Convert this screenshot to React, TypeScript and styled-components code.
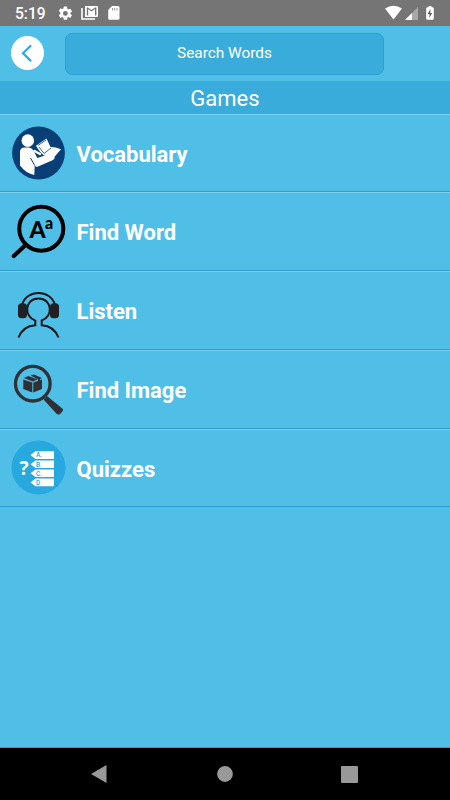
import React from "react";
import styled, { createGlobalStyle } from "styled-components";

const GlobalStyle = createGlobalStyle`
  * { box-sizing: border-box; }
  body { margin: 0; background: #4fbfe8; font-family: Roboto, sans-serif; }
  svg { display: block; }
`;

const Screen = styled.div`
  display: flex;
  flex-direction: column;
  width: 450px;
  height: 800px;
  overflow: hidden;
  background: #4fbfe8;
  color: #fff;
`;

const StatusBar = styled.header`
  display: flex;
  justify-content: space-between;
  height: 26px;
  flex: none;
  background: #757575;
`;

const StatusGroup = styled.div`
  display: flex;
  align-items: center;
`;

const Clock = styled.span`
  width: 42px;
  margin-left: 15px;
  padding-top: 2px;
  font-size: 15.6px;
  font-weight: 500;
  line-height: 26px;
`;

const SearchBar = styled.div`
  display: flex;
  height: 55px;
  flex: none;
  padding: 7px 0 0 11px;
`;

const BackButton = styled.button`
  display: flex;
  align-items: center;
  justify-content: center;
  width: 33px;
  height: 34px;
  margin: 3px 21px 0 0;
  padding: 0;
  border: 0;
  border-radius: 50%;
  background: #fff;
`;

const SearchField = styled.div`
  display: flex;
  align-items: center;
  justify-content: center;
  width: 319px;
  height: 42px;
  padding-bottom: 3px;
  border: 1px solid #309fd0;
  border-radius: 7px;
  background: #3aacdb;
  font-size: 15.4px;
`;

const Title = styled.h1`
  height: 32.6px;
  flex: none;
  margin: 0;
  padding-top: 1px;
  background: #3aacdb;
  font-size: 22px;
  font-weight: 400;
  line-height: 34px;
  text-align: center;
`;

const List = styled.main`
  flex: 1;
  border-bottom: 1px solid #3597bd;
`;

const Row = styled.div`
  display: flex;
  align-items: center;
  height: 78.75px;
  padding: 1px 0 0 11px;
  border-top: 1px solid #77d0f2;
  border-bottom: 1px solid #2b9dd3;
`;

const RowLabel = styled.span`
  margin-left: 10.5px;
  padding-top: 2.2px;
  font-size: 22px;
  font-weight: 700;
  line-height: 30px;
`;

const NavBar = styled.nav`
  display: flex;
  align-items: center;
  justify-content: space-between;
  height: 52px;
  flex: none;
  padding: 0 92px 0 91px;
  background: #000;
`;

const VocabularyIcon = () => (
  <svg width="55" height="56" viewBox="0 0 55 56">
    <circle cx="27.5" cy="28" r="26.4" fill="#073f76" />
    <circle cx="16.8" cy="15.6" r="6.3" fill="#fff" />
    <path d="M9 27q0-4.500 4.500-4.500h3.500q4 0 6 4l3.300 6.500 9.700-3.300q3.500-1 5 1 2-.5 2.500 1.500t-2.500 3.300L27 41.500q-2 .7-3.300-1L23.300 50Q15 48.500 9 40.500Z" fill="#fff" />
    <path d="m19.500 33 4.200 7.500" fill="none" stroke="#073f76" strokeWidth="1" />
    <path d="m25 20.800 10.500-7.300 4 8.500q5 0 10.500 2.300L42.500 33q-4.500-3-9.500-2.500-4-2.800-8-9.700Z" fill="#fff" />
    <path d="m27 20.500 8-5.500M28 22l5 6.500 7-5.500" fill="none" stroke="#073f76" strokeWidth=".8" />
    <path d="m23.500 26 5.500 3" stroke="#fff" strokeWidth="2.500" strokeLinecap="round" />
  </svg>
);

const FindWordIcon = () => (
  <svg width="55" height="56" viewBox="0 0 55 56">
    <circle cx="30.3" cy="24.7" r="22" fill="none" stroke="#000" strokeWidth="4" />
    <path d="M14.500 41 2.800 52" stroke="#000" strokeWidth="4.200" strokeLinecap="round" />
    <text x="18.500" y="34" fontFamily="Lato, sans-serif" fontWeight="900" fontSize="23">A</text>
    <text x="34" y="25" fontFamily="Lato, sans-serif" fontWeight="900" fontSize="16">a</text>
  </svg>
);

const ListenIcon = () => (
  <svg width="55" height="56" viewBox="0 0 55 56">
    <g fill="none" stroke="#171719" strokeWidth="2">
      <path d="M11 22C15 6 40 6 44 22" />
      <path d="M24.300 37.500C12.500 34 13.500 15.500 27.500 15.500S42.500 34 30.700 37.500V42.300Q43 43 47.500 54.500M24.300 37v5.300Q12 43 7.500 54.500" />
    </g>
    <rect x="7" y="20.300" width="9" height="15" rx="3.500" fill="#202024" />
    <rect x="39" y="20.300" width="9" height="15" rx="3.500" fill="#202024" />
  </svg>
);

const FindImageIcon = () => (
  <svg width="55" height="56" viewBox="0 0 55 56">
    <circle cx="21.800" cy="21.700" r="17.300" fill="none" stroke="#303035" strokeWidth="3.300" />
    <path d="m32.500 37.500 3.500-3.500 15 12.300q2 1.700 0 3.700L49 52q-2 1.500-3.700-.5Z" fill="#303035" />
    <path d="m12.300 17.500 9 3v10l-9-3.500Zm10 3 8.700-3V27l-8.700 3.500ZM12.800 16l4.700-2 9 3.500-4.700 2Zm6.700-2.500 3.500-1 8 3.500-2 1v3l-2 .700v-3.200Z" fill="#303035" />
  </svg>
);

const QuizIcon = () => (
  <svg width="55" height="56" viewBox="0 0 55 56">
    <circle cx="27.500" cy="27.500" r="27" fill="#27a8df" />
    <text x="8.500" y="35" fill="#fff" fontFamily="Noto Sans, sans-serif" fontSize="19" fontWeight="700">?</text>
    {["A.", "B.", "C.", "D"].map((letter, i) => (
      <g key={letter} transform={`translate(19 ${11.3 + i * 9.1})`}>
        <path d="M.5 3.800 5.500 0H24v7.600H5.500Z" fill="#fff" />
        <text x="6" y="6.200" fill="#27a8df" fontFamily="Roboto" fontSize="6.500" fontWeight="500">{letter}</text>
      </g>
    ))}
  </svg>
);

const games = [
  { name: "Vocabulary", Icon: VocabularyIcon },
  { name: "Find Word", Icon: FindWordIcon },
  { name: "Listen", Icon: ListenIcon },
  { name: "Find Image", Icon: FindImageIcon },
  { name: "Quizzes", Icon: QuizIcon },
];

export default function App() {
  return (
    <Screen>
      <GlobalStyle />
      <StatusBar>
        <StatusGroup>
          <Clock>5:19</Clock>
          <svg width="66" height="26" viewBox="57 0 66 26" fill="#fff">
            <g transform="translate(57 5) scale(.7)">
              <path d="M19.140 12.940a7 7 0 0 0 0-1.880l2.030-1.580a.5.5 0 0 0 .12-.61l-1.920-3.320a.5.5 0 0 0-.59-.22l-2.390.96a7 7 0 0 0-1.620-.94l-.36-2.540A.5.5 0 0 0 13.930 2h-3.840a.5.5 0 0 0-.47.410l-.36 2.540a7 7 0 0 0-1.620.94l-2.390-.96a.5.5 0 0 0-.59.220L2.740 8.470a.5.5 0 0 0 .12.610l2.030 1.580a7 7 0 0 0 0 1.880l-2.030 1.580a.5.5 0 0 0-.12.610l1.920 3.320c.12.220.37.290.59.220l2.390-.96q.75.600 1.620.94l.36 2.540c.05.240.24.410.47.410h3.840c.24 0 .44-.17.470-.41l.36-2.540q.87-.35 1.620-.94l2.390.96c.22.080.47 0 .59-.22l1.920-3.320a.5.5 0 0 0-.12-.61ZM12 15.500A3.500 3.500 0 1 1 12 8.500a3.500 3.500 0 0 1 0 7Z" fillRule="evenodd" />
            </g>
            <path d="M82 8v11h13" fill="none" stroke="#fff" strokeWidth="1.600" />
            <path d="M85 6h12q1 0 1 1v9q0 1-1 1H85Zm1.800 1.500v8h1.400V9l3.300 2.600L95 9v6.500h1.400v-8h-1.300L91.500 10l-3.600-2.500Z" fillRule="evenodd" />
            <path d="M112 6h6q1.500 0 1.500 1.500v11q0 1.300-1.300 1.300h-8.700q-1.300 0-1.300-1.300V10Z" />
            <path d="M112.500 8v2.500m2.200-2.500v2.500M117 8v2.500" stroke="#9a9a9a" />
          </svg>
        </StatusGroup>
        <StatusGroup>
          <svg width="65" height="26" viewBox="385 0 65 26" fill="#fff">
            <path d="M385 8.500Q393.500 3 402 8.500L393.500 19.500Z" />
            <path d="M418 7v13h-13Z" fill="#a8a8a8" />
            <path d="M412 13v7h-7Z" />
            <path d="M427.500 7.200h1V6h3v1.200h1q1.300 0 1.300 1.300v10q0 1.300-1.300 1.300h-5q-1.300 0-1.300-1.300v-10q0-1.300 1.300-1.300Z" />
            <path d="m430.600 9-3 5h2l-.4 4 3-5h-2Z" fill="#555" />
          </svg>
        </StatusGroup>
      </StatusBar>
      <SearchBar>
        <BackButton aria-label="Back">
          <svg width="33" height="34" viewBox="0 0 33 34"><path d="m19.500 10-7.500 7.300 7.500 7.300" fill="none" stroke="#27ade1" strokeWidth="2.200" strokeLinecap="round" /></svg>
        </BackButton>
        <SearchField>Search Words</SearchField>
      </SearchBar>
      <Title>Games</Title>
      <List>
        {games.map(({ name, Icon }) => (
          <Row key={name}><Icon /><RowLabel>{name}</RowLabel></Row>
        ))}
      </List>
      <NavBar>
        <svg width="16" height="18" viewBox="0 0 16 18"><path d="M0 9 15.500 0v18Z" fill="#999" /></svg>
        <svg width="17" height="16" viewBox="0 0 17 16"><circle cx="9" cy="8" r="7.900" fill="#999" /></svg>
        <svg width="17" height="17" viewBox="0 0 17 17"><rect width="17" height="17" rx="1" fill="#999" /></svg>
      </NavBar>
    </Screen>
  );
}
